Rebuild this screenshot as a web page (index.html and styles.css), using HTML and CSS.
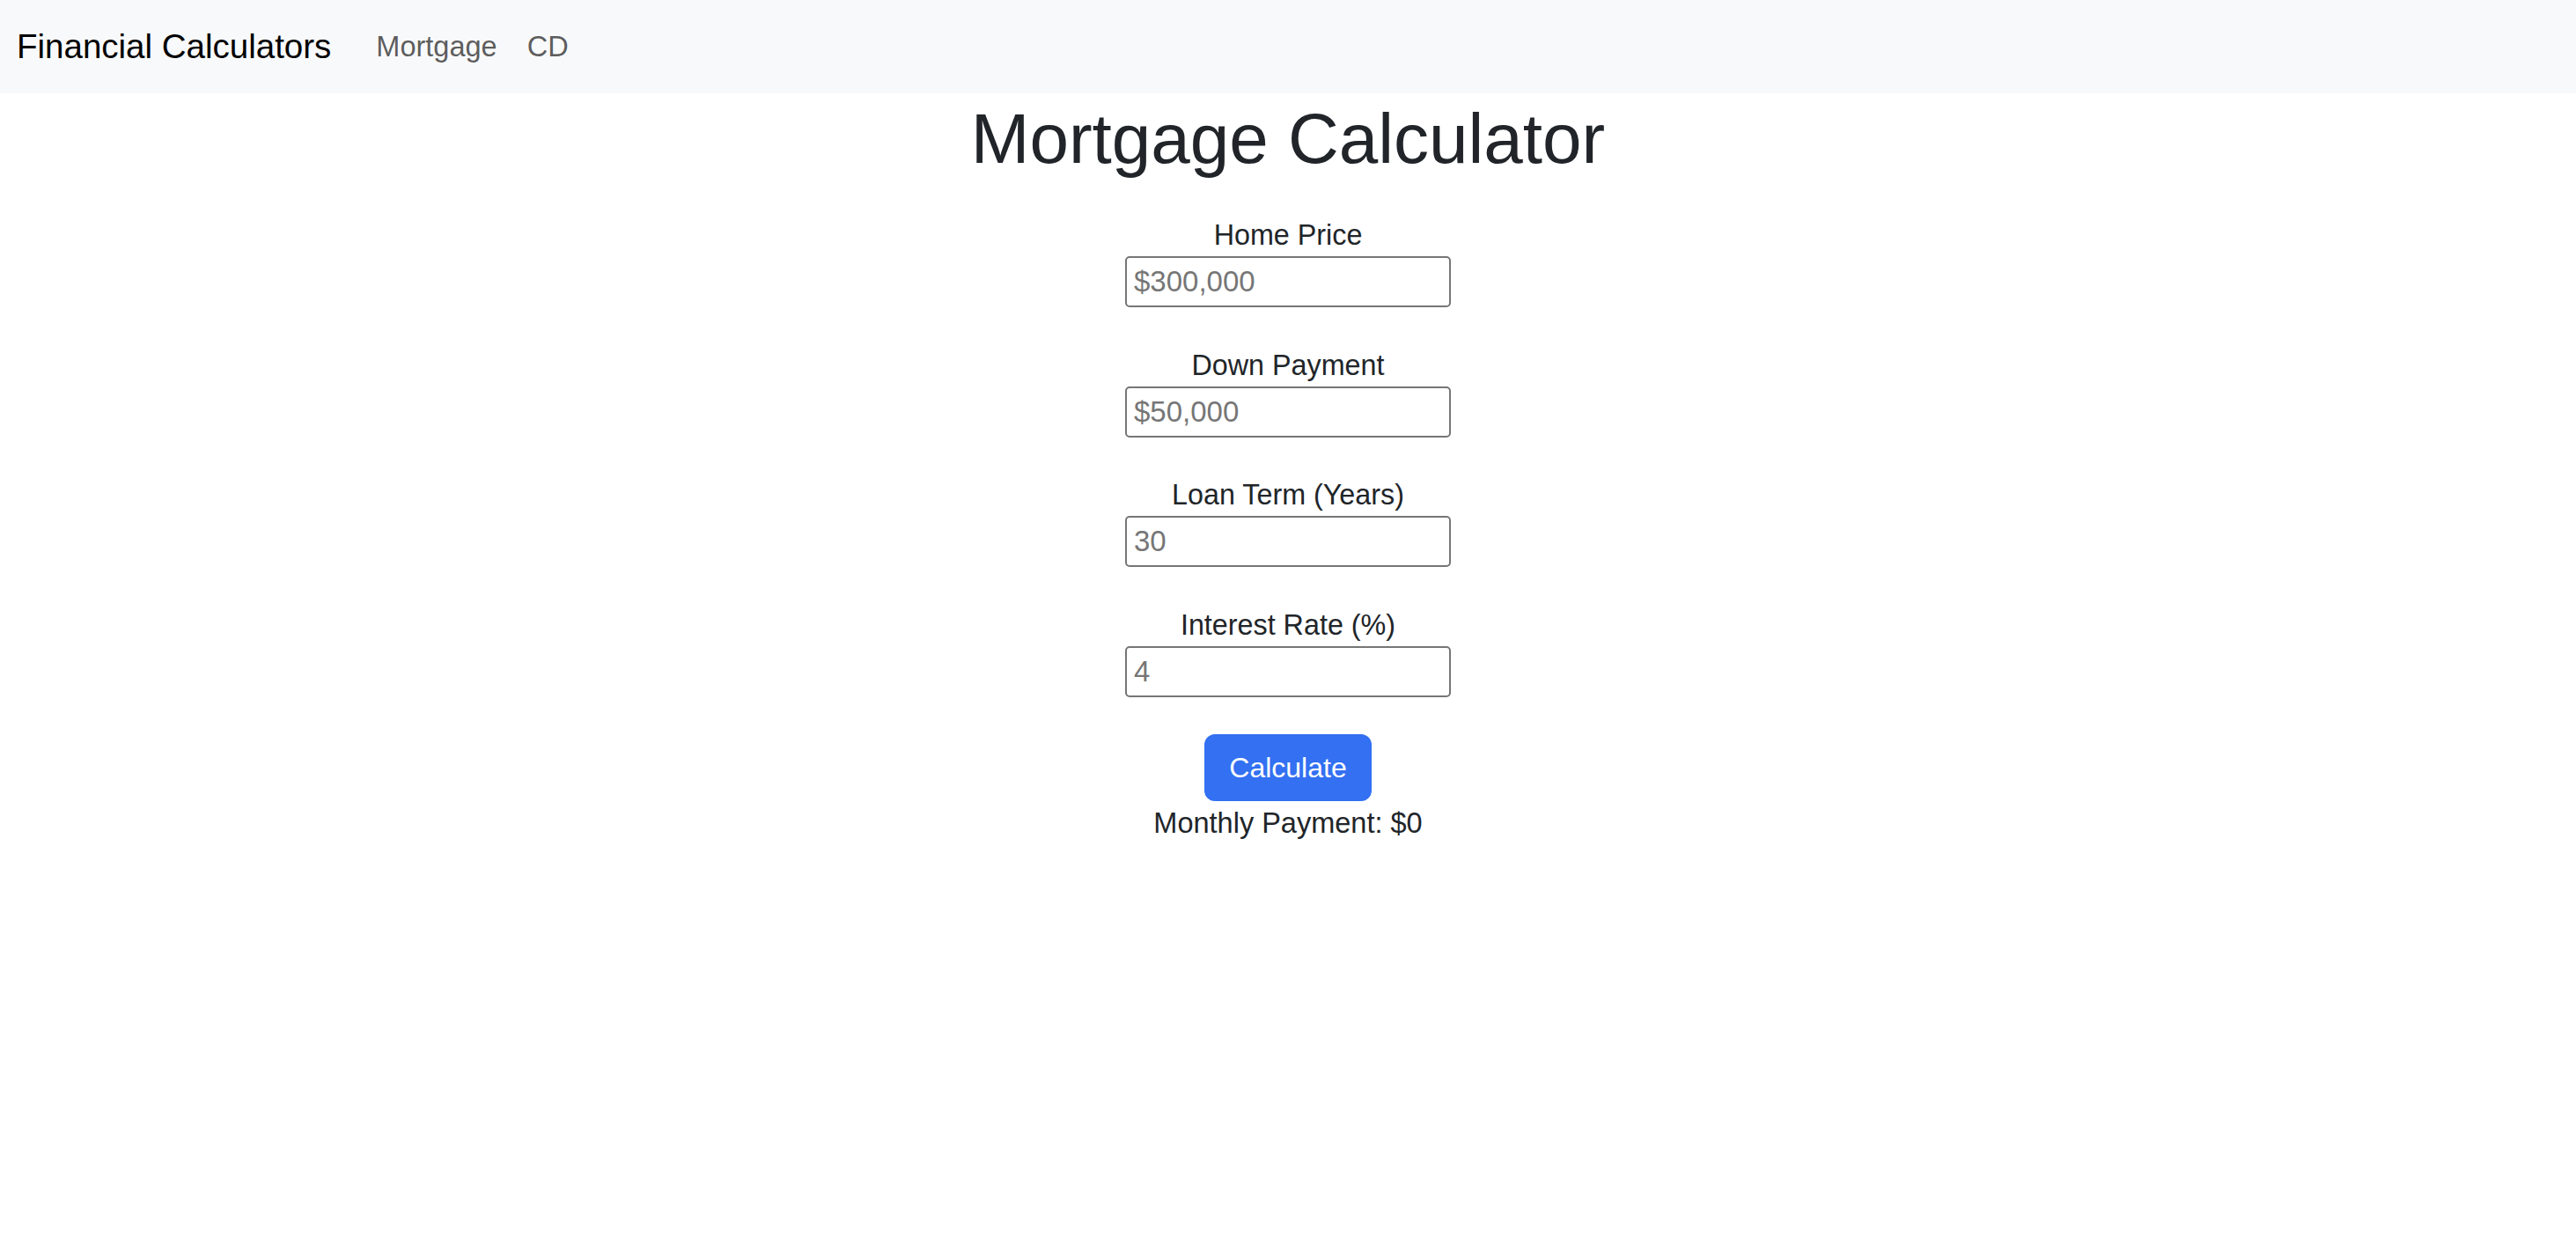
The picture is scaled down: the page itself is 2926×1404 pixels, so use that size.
FILE: index.html
```html
<!DOCTYPE html>
<html lang="en">
<head>
<meta charset="utf-8">
<title>Mortgage Calculator</title>
<link rel="stylesheet" href="styles.css">
</head>
<body>
<nav class="navbar">
  <a class="brand" href="#">Financial Calculators</a>
  <ul class="nav-links">
    <li><a class="nav-link" href="#">Mortgage</a></li>
    <li><a class="nav-link" href="#">CD</a></li>
  </ul>
</nav>
<main class="main">
  <h1 class="title">Mortgage Calculator</h1>
  <form class="calc-form">
    <div class="field">
      <label class="field-label" for="price">Home Price</label>
      <input class="field-input" id="price" type="text" placeholder="$300,000">
    </div>
    <div class="field">
      <label class="field-label" for="down">Down Payment</label>
      <input class="field-input" id="down" type="text" placeholder="$50,000">
    </div>
    <div class="field">
      <label class="field-label" for="term">Loan Term (Years)</label>
      <input class="field-input" id="term" type="text" placeholder="30">
    </div>
    <div class="field">
      <label class="field-label" for="rate">Interest Rate (%)</label>
      <input class="field-input" id="rate" type="text" placeholder="4">
    </div>
    <button class="btn-primary" type="button">Calculate</button>
    <p class="result">Monthly Payment: $0</p>
  </form>
</main>
</body>
</html>
```
FILE: styles.css
```css
html, body {
  margin: 0;
  padding: 0;
  background: #ffffff;
  font-family: "Liberation Sans", Arial, sans-serif;
  color: #212529;
}

.navbar {
  height: 106px;
  background: #f8f9fa;
  display: flex;
  align-items: center;
  padding: 0 19px;
  box-sizing: border-box;
}

.brand {
  font-size: 38.5px;
  line-height: 60px;
  color: #000000;
  text-decoration: none;
  margin-right: 34px;
}

.nav-links {
  list-style: none;
  margin: 0;
  padding: 0;
  display: flex;
}

.nav-link {
  display: block;
  font-size: 32.5px;
  line-height: 48px;
  padding: 0 17px;
  color: rgba(0, 0, 0, 0.65);
  text-decoration: none;
}

.main {
  text-align: center;
}

.title {
  font-size: 80px;
  font-weight: 500;
  line-height: 96px;
  margin: 4px 0 0;
  color: #212529;
}

.calc-form {
  display: flex;
  flex-direction: column;
  align-items: center;
  margin-top: 38px;
}

.field {
  display: flex;
  flex-direction: column;
  align-items: center;
  margin-bottom: 42.5px;
}

.field-label {
  font-size: 32.3px;
  line-height: 47px;
  color: #212529;
}

.field-input {
  width: 370px;
  height: 58px;
  box-sizing: border-box;
  border: 2px solid #767676;
  border-radius: 5px;
  padding: 0 8px;
  font-family: "Liberation Sans", Arial, sans-serif;
  font-size: 33px;
  color: #212529;
  background: #ffffff;
  outline: none;
}

.field-input::placeholder {
  color: #767676;
  opacity: 1;
}

.btn-primary {
  font-family: "Liberation Sans", Arial, sans-serif;
  font-size: 32px;
  line-height: 48px;
  padding: 12px 26px;
  border: 2px solid #3370f2;
  border-radius: 12px;
  background: #3370f2;
  color: #ffffff;
  cursor: pointer;
}

.result {
  margin: 1px 0 0;
  font-size: 32.5px;
  line-height: 48px;
  color: #212529;
}
```
